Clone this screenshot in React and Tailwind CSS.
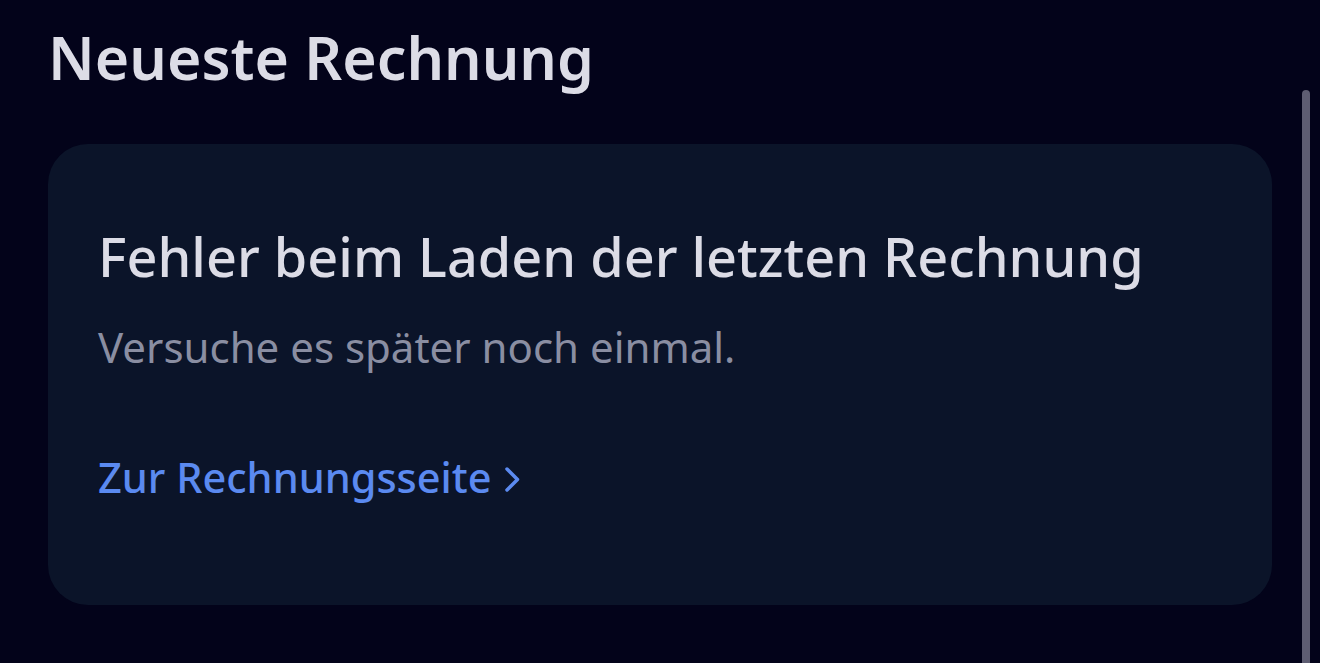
export default function App() {
  return (
    <div
      className="relative min-h-screen h-[663px] overflow-hidden bg-[#03031a]"
      style={{ fontFamily: '"Noto Sans", "Open Sans", sans-serif' }}
    >
      {/* Scrollbar */}
      <div className="absolute right-[10px] top-[90px] bottom-0 w-[8px] rounded-t-full bg-[#5e5d72]" />

      <div className="pt-5 pl-12 pr-12">
        <h2 className="text-[59px] leading-[74px] font-semibold text-[#dcdce6]">
          Neueste Rechnung
        </h2>

        <div className="mt-[50px] rounded-[40px] bg-[#0b1429] pt-[80px] pb-[102px] pl-[50px] pr-[50px]">
          <h3 className="text-[54px] leading-[64px] font-medium text-[#dcdce6]">
            Fehler beim Laden der letzten Rechnung
          </h3>
          <p className="mt-[33px] text-[42px] leading-[52px] text-[#8a8ea2]">
            Versuche es später noch einmal.
          </p>
          <a
            href="#"
            className="mt-[78px] flex items-center gap-3 text-[41.5px] leading-[52px] font-medium text-[#5b8af0]"
          >
            Zur Rechnungsseite
            <svg width="17" height="27" viewBox="0 0 17 27" fill="none" className="mt-1">
              <path d="M3 3L13.5 13.5L3 24" stroke="currentColor" strokeWidth="3.5" strokeLinecap="round" strokeLinejoin="round" />
            </svg>
          </a>
        </div>
      </div>
    </div>
  );
}
